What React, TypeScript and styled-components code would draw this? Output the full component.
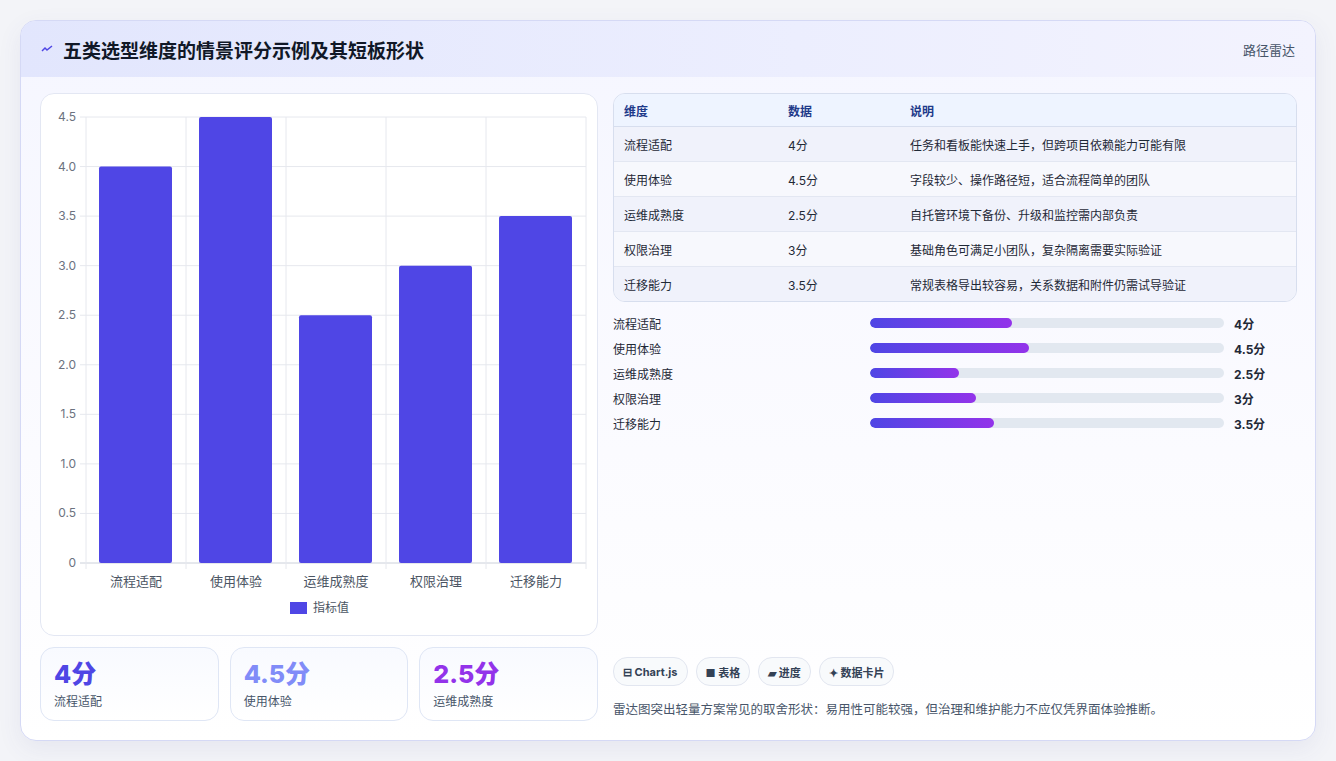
import React from 'react';
import styled, { createGlobalStyle } from 'styled-components';

const GlobalStyle = createGlobalStyle`
  html, body { margin: 0; padding: 0; background: #f3f4f8; }
  body { font-family: Inter, "Noto Sans CJK SC", sans-serif; color: #1e1b4b; }
`;

type Item = { name: string; value: number; note: string };
const items: Item[] = [
  { name: '流程适配', value: 4, note: '任务和看板能快速上手，但跨项目依赖能力可能有限' },
  { name: '使用体验', value: 4.5, note: '字段较少、操作路径短，适合流程简单的团队' },
  { name: '运维成熟度', value: 2.5, note: '自托管环境下备份、升级和监控需内部负责' },
  { name: '权限治理', value: 3, note: '基础角色可满足小团队，复杂隔离需要实际验证' },
  { name: '迁移能力', value: 3.5, note: '常规表格导出较容易，关系数据和附件仍需试导验证' },
];

const Page = styled.div`
  padding: 20px 20px 20px 20px;
  height: 761px;
  box-sizing: border-box;
`;

const Card = styled.div`
  width: 1296px;
  height: 721px;
  border: 1px solid #d5d9f5;
  border-radius: 16px;
  background: linear-gradient(180deg, #f5f6ff 0%, #fbfbff 60%, #ffffff 100%);
  box-shadow: 0 8px 24px rgba(80, 80, 140, 0.08);
  overflow: hidden;
  display: flex;
  flex-direction: column;
  box-sizing: border-box;
`;

const Header = styled.div`
  height: 56px;
  flex-shrink: 0;
  display: flex;
  align-items: center;
  justify-content: space-between;
  padding: 0 20px;
  background: linear-gradient(90deg, #e2e6fd 0%, #eceefe 60%, #f3f3fe 100%);
`;

const Title = styled.h1`
  margin: 0;
  font-size: 19px;
  font-weight: 700;
  color: #111827;
  display: flex;
  align-items: center;
  gap: 10px;
`;

const HeaderLink = styled.span`
  font-size: 13px;
  color: #475569;
`;

const Body = styled.div`
  flex: 1;
  display: grid;
  grid-template-columns: 558px 1fr;
  gap: 15px;
  padding: 16px 18px 18px 19px;
`;

const LeftCol = styled.div`
  display: flex;
  flex-direction: column;
  gap: 11px;
`;

const ChartCard = styled.div`
  height: 543px;
  background: #fff;
  border: 1px solid #e3e7f3;
  border-radius: 14px;
  box-sizing: border-box;
`;

const Stats = styled.div`
  display: grid;
  grid-template-columns: repeat(3, 1fr);
  gap: 11px;
`;

const Stat = styled.div`
  height: 74px;
  box-sizing: border-box;
  border: 1px solid #dfe6f5;
  border-radius: 14px;
  background: linear-gradient(180deg, #f8faff, #ffffff);
  padding: 10px 13px;
`;

const StatValue = styled.div<{ $color: string }>`
  font-size: 25px;
  font-weight: 800;
  line-height: 32px;
  color: ${(p) => p.$color};
`;

const StatLabel = styled.div`
  font-size: 12px;
  color: #475569;
  margin-top: 2px;
`;

const RightCol = styled.div`
  display: flex;
  flex-direction: column;
`;

const Table = styled.table`
  width: 100%;
  border-collapse: separate;
  border-spacing: 0;
  border: 1px solid #d7deee;
  border-radius: 12px;
  overflow: hidden;
  font-size: 12px;
`;

const Th = styled.th`
  text-align: left;
  font-weight: 700;
  color: #1e3a8a;
  background: #eef4ff;
  height: 32px;
  padding: 0 10px;
  border-bottom: 1px solid #d7deee;
`;

const Tr = styled.tr<{ $alt: boolean }>`
  background: ${(p) => (p.$alt ? '#f7f8fd' : '#f0f2fb')};
`;

const Td = styled.td<{ $last: boolean }>`
  height: 34px;
  padding: 0 10px;
  color: #1f2937;
  border-bottom: ${(p) => (p.$last ? 'none' : '1px solid #e3e7f2')};
`;

const Bars = styled.div`
  display: flex;
  flex-direction: column;
  gap: 7px;
  margin-top: 12px;
`;

const BarRow = styled.div`
  display: grid;
  grid-template-columns: 257px 354px 1fr;
  align-items: center;
  gap: 0;
  height: 18px;
  font-size: 12px;
`;

const BarLabel = styled.span`
  color: #1f2937;
`;

const Track = styled.div`
  height: 10px;
  border-radius: 5px;
  background: #e2e8f0;
  overflow: hidden;
`;

const Fill = styled.div`
  height: 100%;
  border-radius: 5px;
  background: linear-gradient(90deg, #4f46e5, #9333ea);
`;

const BarValue = styled.span`
  font-weight: 700;
  padding-left: 10px;
  color: #1f2937;
`;

const Spacer = styled.div`
  flex: 1;
`;

const Chips = styled.div`
  display: flex;
  gap: 8px;
`;

const Chip = styled.span`
  height: 27px;
  display: inline-flex;
  align-items: center;
  gap: 3px;
  padding: 0 9px;
  border: 1px solid #e2e6f0;
  border-radius: 14px;
  background: #f8fafc;
  font-size: 11px;
  font-weight: 700;
  color: #334155;
`;

const Note = styled.p`
  margin: 13px 0 4px;
  font-size: 12.5px;
  color: #475569;
`;

const BarChart = () => {
  const x0 = 45, y0 = 469, top = 23, w = 500;
  const scale = (y0 - top) / 4.5;
  const ticks = [0, 0.5, 1, 1.5, 2, 2.5, 3, 3.5, 4, 4.5];
  const cw = w / items.length;
  return (
    <svg width="558" height="541" viewBox="0 0 558 541">
      {ticks.map((t) => (
        <g key={t}>
          <line x1={x0 - 6} x2={x0 + w} y1={y0 - t * scale} y2={y0 - t * scale} stroke={t === 0 ? '#cbd0da' : '#e6e8ee'} />
          <text x={x0 - 10} y={y0 - t * scale + 4} textAnchor="end" fontSize="12" fill="#6b7280" fontFamily="Inter, sans-serif">
            {t === 0 ? '0' : t.toFixed(1)}
          </text>
        </g>
      ))}
      {items.map((_, i) => (
        <line key={i} x1={x0 + i * cw} x2={x0 + i * cw} y1={top} y2={y0 + 6} stroke="#e6e8ee" />
      ))}
      <line x1={x0 + w} x2={x0 + w} y1={top} y2={y0 + 6} stroke="#e6e8ee" />
      {items.map((it, i) => (
        <g key={it.name}>
          <rect x={x0 + i * cw + 13} y={y0 - it.value * scale} width={cw - 27} height={it.value * scale} rx="2" fill="#4f46e5" />
          <text x={x0 + i * cw + cw / 2} y={y0 + 23} textAnchor="middle" fontSize="13" fill="#4b5563" fontFamily="'Noto Sans CJK SC', sans-serif">
            {it.name}
          </text>
        </g>
      ))}
      <rect x="249" y="508" width="17" height="12" fill="#4f46e5" />
      <text x="272" y="518" fontSize="12" fill="#4b5563" fontFamily="'Noto Sans CJK SC', sans-serif">指标值</text>
    </svg>
  );
};

const statColors = ['#4f46e5', '#818cf8', '#9333ea'];

export default function App() {
  return (
    <Page>
      <GlobalStyle />
      <Card>
        <Header>
          <Title>
            <svg width="12" height="10" viewBox="0 0 12 10">
              <path d="M1 7 L4 4 L6 6 L11 2" stroke="#4f46e5" strokeWidth="1.5" fill="none" />
            </svg>
            五类选型维度的情景评分示例及其短板形状
          </Title>
          <HeaderLink>路径雷达</HeaderLink>
        </Header>
        <Body>
          <LeftCol>
            <ChartCard>
              <BarChart />
            </ChartCard>
            <Stats>
              {items.slice(0, 3).map((it, i) => (
                <Stat key={it.name}>
                  <StatValue $color={statColors[i]}>{it.value}分</StatValue>
                  <StatLabel>{it.name}</StatLabel>
                </Stat>
              ))}
            </Stats>
          </LeftCol>
          <RightCol>
            <Table>
              <thead>
                <tr>
                  <Th style={{ width: 144 }}>维度</Th>
                  <Th style={{ width: 102 }}>数据</Th>
                  <Th>说明</Th>
                </tr>
              </thead>
              <tbody>
                {items.map((it, i) => (
                  <Tr key={it.name} $alt={i % 2 === 1}>
                    <Td $last={i === items.length - 1}>{it.name}</Td>
                    <Td $last={i === items.length - 1}>{it.value}分</Td>
                    <Td $last={i === items.length - 1}>{it.note}</Td>
                  </Tr>
                ))}
              </tbody>
            </Table>
            <Bars>
              {items.map((it) => (
                <BarRow key={it.name}>
                  <BarLabel>{it.name}</BarLabel>
                  <Track>
                    <Fill style={{ width: `${it.value * 10}%` }} />
                  </Track>
                  <BarValue>{it.value}分</BarValue>
                </BarRow>
              ))}
            </Bars>
            <Spacer />
            <Chips>
              <Chip>⊟ Chart.js</Chip>
              <Chip>■ 表格</Chip>
              <Chip>▰ 进度</Chip>
              <Chip>✦ 数据卡片</Chip>
            </Chips>
            <Note>雷达图突出轻量方案常见的取舍形状：易用性可能较强，但治理和维护能力不应仅凭界面体验推断。</Note>
          </RightCol>
        </Body>
      </Card>
    </Page>
  );
}
